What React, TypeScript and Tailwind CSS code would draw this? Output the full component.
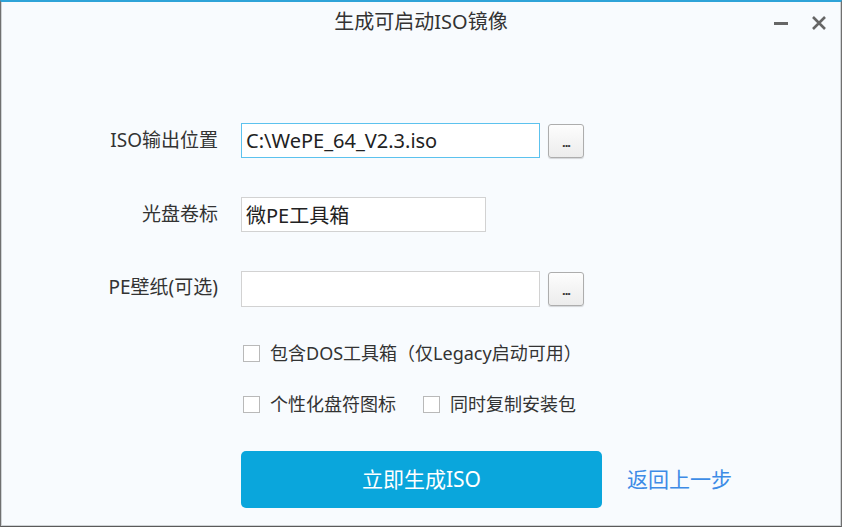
import { useState } from 'react';

const font = { fontFamily: '"Noto Sans", "Noto Sans CJK SC", sans-serif' };

function BrowseButton() {
  return (
    <button className="ml-2 w-[36px] h-[34px] rounded-[3px] border border-[#adadad] bg-gradient-to-b from-[#fdfdfd] to-[#ececec] flex items-end justify-center pb-[8px] shadow-[0_1px_1px_rgba(0,0,0,0.15)]">
      <span className="text-[#333] text-[13px] leading-none tracking-[-1px] font-bold">...</span>
    </button>
  );
}

function Checkbox({ label, checked, onChange }: { label: string; checked: boolean; onChange: () => void }) {
  return (
    <label className="flex items-center cursor-pointer" onClick={onChange}>
      <span className="w-[17px] h-[17px] border border-[#b9b9b9] bg-white flex items-center justify-center">
        {checked && <span className="w-[9px] h-[9px] bg-[#0aa5dc]" />}
      </span>
      <span className="ml-[10px] text-[18px] leading-none text-[#333]">{label}</span>
    </label>
  );
}

export default function App() {
  const [isoPath, setIsoPath] = useState('C:\\WePE_64_V2.3.iso');
  const [volume, setVolume] = useState('微PE工具箱');
  const [wallpaper, setWallpaper] = useState('');
  const [dos, setDos] = useState(false);
  const [icons, setIcons] = useState(false);
  const [copyPkg, setCopyPkg] = useState(false);

  return (
    <div style={font} className="w-[842px] h-[527px] bg-[#f8fbfe] border-t-2 border-t-[#2ea3d8] border-x border-b border-x-[#707070] border-b-[#5a5a5a] shadow-[inset_1px_0_0_#cfd3d6,inset_-1px_0_0_#cfd3d6,inset_0_-1px_0_#cfd3d6] flex flex-col">
      {/* title bar */}
      <div className="h-[40px] grid grid-cols-[1fr_auto_1fr] items-center">
        <div />
        <div className="text-[20px] text-[#333] leading-none">生成可启动ISO镜像</div>
        <div className="flex justify-end items-center gap-[22px] pr-[14px] pt-[2px]">
          <button className="w-[16px] h-[16px] flex items-center justify-center">
            <span className="block w-[14px] h-[3px] bg-[#666]" />
          </button>
          <button className="w-[16px] h-[16px] flex items-center justify-center">
            <svg width="16" height="16" viewBox="0 0 16 16">
              <path d="M2 2 L14 14 M14 2 L2 14" stroke="#666" strokeWidth="2.6" />
            </svg>
          </button>
        </div>
      </div>

      {/* form */}
      <div className="pl-[98px] pt-[81px] flex flex-col">
        <div className="flex items-center h-[35px]">
          <div className="w-[119px] text-right text-[19px] text-[#333]">ISO输出位置</div>
          <input
            value={isoPath}
            onChange={e => setIsoPath(e.target.value)}
            className="ml-[23px] w-[299px] h-[35px] border border-[#5cc2ee] bg-white px-[4px] text-[20px] text-[#222] outline-none"
          />
          <BrowseButton />
        </div>

        <div className="flex items-center h-[35px] mt-[39px]">
          <div className="w-[119px] text-right text-[19px] text-[#333]">光盘卷标</div>
          <input
            value={volume}
            onChange={e => setVolume(e.target.value)}
            className="ml-[23px] w-[245px] h-[35px] border border-[#d2d2d2] bg-white px-[4px] text-[20px] text-[#222] outline-none"
          />
        </div>

        <div className="flex items-center h-[35px] mt-[39px]">
          <div className="w-[119px] text-right text-[19px] text-[#333] -mt-[3px]">PE壁纸(可选)</div>
          <input
            value={wallpaper}
            onChange={e => setWallpaper(e.target.value)}
            className="ml-[23px] w-[299px] h-[36px] border border-[#d2d2d2] bg-white px-[4px] text-[20px] text-[#222] outline-none"
          />
          <BrowseButton />
        </div>

        <div className="pl-[144px] mt-[38px] flex flex-col gap-[33px]">
          <Checkbox label="包含DOS工具箱（仅Legacy启动可用）" checked={dos} onChange={() => setDos(!dos)} />
          <div className="flex items-center gap-[27px]">
            <Checkbox label="个性化盘符图标" checked={icons} onChange={() => setIcons(!icons)} />
            <Checkbox label="同时复制安装包" checked={copyPkg} onChange={() => setCopyPkg(!copyPkg)} />
          </div>
        </div>

        <div className="pl-[142px] mt-[38px] flex items-center">
          <button className="w-[361px] h-[57px] rounded-[5px] bg-[#0aa6dc] text-white text-[21px]">立即生成ISO</button>
          <a href="#" className="ml-[25px] text-[21px] text-[#3d8be6]">返回上一步</a>
        </div>
      </div>
    </div>
  );
}
